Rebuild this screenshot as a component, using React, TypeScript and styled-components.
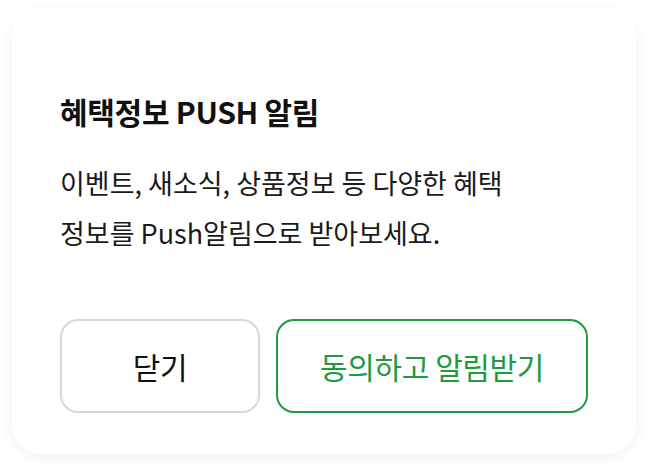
import React from "react";
import styled, { createGlobalStyle } from "styled-components";

const GlobalStyle = createGlobalStyle`
  html, body {
    margin: 0;
    padding: 0;
    background: #ffffff;
  }
  body {
    font-family: "Noto Sans CJK KR", "Noto Sans", sans-serif;
    color: #111111;
  }
`;

const Page = styled.div`
  width: 648px;
  height: 472px;
  padding: 8px 12px 0;
  box-sizing: border-box;
`;

const Sheet = styled.div`
  background: #ffffff;
  border-radius: 28px;
  box-shadow: 0 4px 14px rgba(0, 0, 0, 0.06);
  padding: 85px 48px 41px;
  display: flex;
  flex-direction: column;
`;

const Title = styled.h2`
  margin: 0;
  font-size: 30px;
  line-height: 36px;
  font-weight: 700;
  letter-spacing: -0.3px;
  color: #111111;
`;

const Message = styled.p`
  margin: 29px 0 0;
  font-size: 27px;
  line-height: 50px;
  font-weight: 400;
  letter-spacing: 0;
  color: #1a1a1a;
`;

const Actions = styled.div`
  display: grid;
  grid-template-columns: 200px 1fr;
  gap: 16px;
  margin-top: 61px;
`;

const Button = styled.button<{ $primary?: boolean }>`
  height: 94px;
  border-radius: 18px;
  background: #ffffff;
  border: ${(p) => (p.$primary ? "2px solid #1e9a41" : "2px solid #d8d8d8")};
  color: ${(p) => (p.$primary ? "#1e9a41" : "#111111")};
  font-family: "Noto Sans CJK KR", "Noto Sans", sans-serif;
  font-size: 30px;
  font-weight: 400;
  letter-spacing: -0.4px;
  cursor: pointer;
`;

export default function App() {
  return (
    <>
      <GlobalStyle />
      <Page>
        <Sheet>
          <Title>혜택정보 PUSH 알림</Title>
          <Message>
            이벤트, 새소식, 상품정보 등 다양한 혜택
            <br />
            정보를 Push알림으로 받아보세요.
          </Message>
          <Actions>
            <Button>닫기</Button>
            <Button $primary>동의하고 알림받기</Button>
          </Actions>
        </Sheet>
      </Page>
    </>
  );
}
